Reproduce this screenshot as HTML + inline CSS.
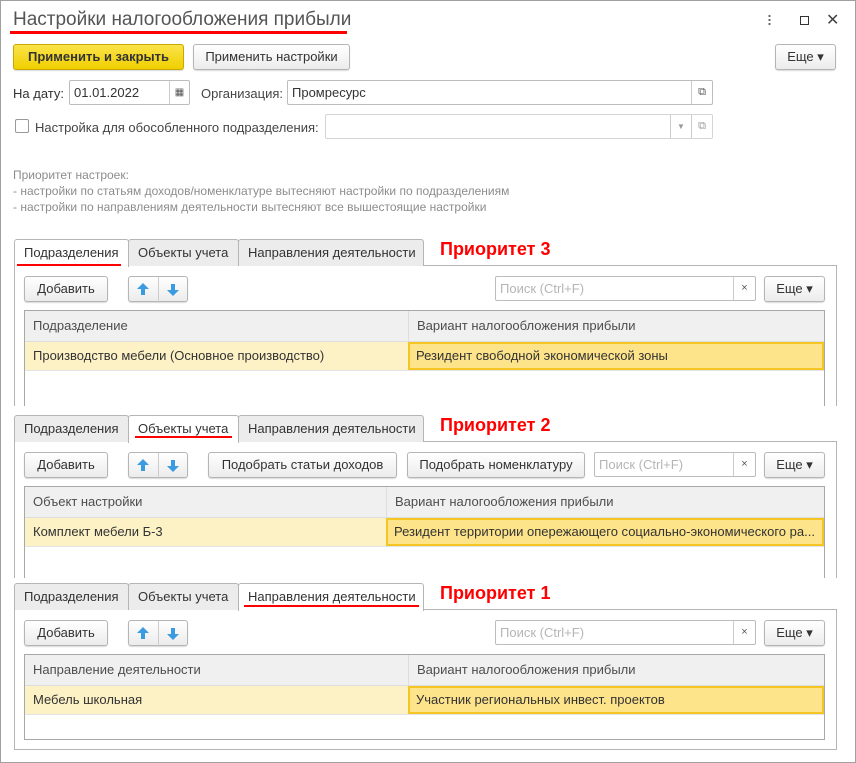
<!DOCTYPE html>
<html><head><meta charset="utf-8"><style>
*{box-sizing:border-box;margin:0;padding:0}
body{width:856px;height:763px;background:#fff;font-family:"Liberation Sans",Arial,sans-serif;font-size:13px;color:#333;position:relative;overflow:hidden}
.a{position:absolute}
.win{left:0;top:0;width:856px;height:763px;border:1px solid #a0a0a0}
.btn{position:absolute;height:26px;border:1px solid #b5b5b5;border-radius:3px;background:linear-gradient(#fff,#ececec);box-shadow:0 1px 1px rgba(0,0,0,.15);text-align:center;line-height:24px;color:#333;white-space:nowrap}
.inp{position:absolute;height:25px;border:1px solid #bdbdbd;border-radius:2px;background:#fff;line-height:23px;padding-left:4px;color:#333}
.seg{position:absolute;top:0;height:23px;border-left:1px solid #ccc;text-align:center;color:#555}
.tab{position:absolute;height:27px;border:1px solid #b5b5b5;border-bottom:none;border-radius:3px 3px 0 0;background:#ececec;line-height:25px;padding-left:9px;color:#333;white-space:nowrap;overflow:hidden}
.tab.on{background:#fff;height:28px}
.pan{position:absolute;border:1px solid #b5b5b5;border-bottom:none}
.grid{position:absolute;border:1px solid #a8a8a8;border-bottom:none;background:#fff}
.hd{position:absolute;left:0;right:0;top:0;height:31px;background:#f0f0f0;border-bottom:1px solid #ddd;line-height:30px;color:#4d4d4d}
.row{position:absolute;left:0;right:0;top:31px;height:29px;background:#fdf2c6;border-bottom:1px solid #e3e3e3;line-height:28px;color:#333}
.sel{position:absolute;top:0;right:0;height:28px;background:#fde48b;border:2px solid #f5c623;line-height:24px;padding-left:6px;white-space:nowrap;overflow:hidden}
.red{color:#ff0000;font-weight:bold;font-size:18px}
.ul{position:absolute;height:3px;background:#ff0000}
.ph{color:#b5b5b5}
.arr{position:absolute;width:60px;height:26px;border:1px solid #b5b5b5;border-radius:3px;background:linear-gradient(#fff,#ececec);box-shadow:0 1px 1px rgba(0,0,0,.15)}
</style></head><body>
<div class="a win"></div>
<div class="a" style="left:13px;top:9px;font-size:19px;color:#555">Настройки налогообложения прибыли</div>
<div class="ul" style="left:10px;top:31px;width:337px"></div>
<div class="a" style="left:768px;top:14px;width:3px;height:13px;background:radial-gradient(circle,#666 1px,transparent 1.3px) 0 0/3px 4px"></div>
<div class="a" style="left:800px;top:16px;width:9px;height:9px;border:1px solid #333"></div>
<div class="a" style="left:826px;top:10px;font-size:16px;color:#444;font-weight:100">✕</div>

<div class="btn" style="left:13px;top:44px;width:171px;background:linear-gradient(#fbe34a,#f0cf00);border-color:#c9a900;font-weight:bold;color:#333">Применить и закрыть</div>
<div class="btn" style="left:193px;top:44px;width:157px">Применить настройки</div>
<div class="btn" style="left:775px;top:44px;width:61px">Еще ▾</div>

<div class="a" style="left:13px;top:86px">На дату:</div>
<div class="inp" style="left:69px;top:80px;width:121px">01.01.2022<div class="seg" style="left:99px;width:20px;font-size:10px">▦</div></div>
<div class="a" style="left:201px;top:86px;color:#444">Организация:</div>
<div class="inp" style="left:287px;top:80px;width:426px">Промресурс<div class="seg" style="left:403px;width:21px;font-size:11px">⧉</div></div>

<div class="a" style="left:15px;top:119px;width:14px;height:14px;border:1px solid #999;border-radius:2px"></div>
<div class="a" style="left:35px;top:120px;color:#444">Настройка для обособленного подразделения:</div>
<div class="inp" style="left:325px;top:114px;width:388px;border-color:#d5d5d5"><div class="seg" style="left:344px;width:21px;font-size:8px;color:#999">▼</div><div class="seg" style="left:365px;width:21px;font-size:11px;color:#999">⧉</div></div>

<div class="a" style="left:13px;top:167px;font-size:12px;color:#8c8c8c;line-height:16px">Приоритет настроек:<br>- настройки по статьям доходов/номенклатуре вытесняют настройки по подразделениям<br>- настройки по направлениям деятельности вытесняют все вышестоящие настройки</div>

<!-- section 1 -->
<div class="pan" style="left:14px;top:265px;width:823px;height:141px"></div>
<div class="tab on" style="left:14px;top:239px;width:115px">Подразделения</div>
<div class="tab" style="left:128px;top:239px;width:111px">Объекты учета</div>
<div class="tab" style="left:238px;top:239px;width:186px">Направления деятельности</div>
<div class="ul" style="left:17px;top:264px;width:104px;height:2px"></div>
<div class="a red" style="left:440px;top:239px">Приоритет 3</div>
<div class="btn" style="left:24px;top:276px;width:84px">Добавить</div>
<div class="arr" style="left:128px;top:276px"><svg width="60" height="26" class="a"><line x1="29.5" y1="0" x2="29.5" y2="26" stroke="#ccc"/><path d="M14 6l-6 6h4v6h4v-6h4z" fill="#3a9be0"/><path d="M44 19l-6-6h4V7h4v6h4z" fill="#3a9be0"/></svg></div>
<div class="inp" style="left:495px;top:276px;width:261px"><span class="ph">Поиск (Ctrl+F)</span><div class="seg" style="left:237px;width:22px;font-size:11px">×</div></div>
<div class="btn" style="left:764px;top:276px;width:61px">Еще ▾</div>
<div class="grid" style="left:24px;top:310px;width:801px;height:96px">
<div class="hd"><span class="a" style="left:8px">Подразделение</span><span class="a" style="left:383px;top:0;height:31px;border-left:1px solid #ddd;padding-left:8px">Вариант налогообложения прибыли</span></div>
<div class="row"><span class="a" style="left:8px">Производство мебели (Основное производство)</span><div class="sel" style="left:383px">Резидент свободной экономической зоны</div></div>
</div>

<!-- section 2 -->
<div class="pan" style="left:14px;top:441px;width:823px;height:137px"></div>
<div class="tab" style="left:14px;top:415px;width:115px">Подразделения</div>
<div class="tab on" style="left:128px;top:415px;width:111px">Объекты учета</div>
<div class="tab" style="left:238px;top:415px;width:186px">Направления деятельности</div>
<div class="ul" style="left:135px;top:436px;width:97px;height:2px"></div>
<div class="a red" style="left:440px;top:415px">Приоритет 2</div>
<div class="btn" style="left:24px;top:452px;width:84px">Добавить</div>
<div class="arr" style="left:128px;top:452px"><svg width="60" height="26" class="a"><line x1="29.5" y1="0" x2="29.5" y2="26" stroke="#ccc"/><path d="M14 6l-6 6h4v6h4v-6h4z" fill="#3a9be0"/><path d="M44 19l-6-6h4V7h4v6h4z" fill="#3a9be0"/></svg></div>
<div class="btn" style="left:208px;top:452px;width:189px">Подобрать статьи доходов</div>
<div class="btn" style="left:407px;top:452px;width:178px">Подобрать номенклатуру</div>
<div class="inp" style="left:594px;top:452px;width:162px"><span class="ph">Поиск (Ctrl+F)</span><div class="seg" style="left:138px;width:22px;font-size:11px">×</div></div>
<div class="btn" style="left:764px;top:452px;width:61px">Еще ▾</div>
<div class="grid" style="left:24px;top:486px;width:801px;height:92px">
<div class="hd"><span class="a" style="left:8px">Объект настройки</span><span class="a" style="left:361px;top:0;height:31px;border-left:1px solid #ddd;padding-left:8px">Вариант налогообложения прибыли</span></div>
<div class="row"><span class="a" style="left:8px">Комплект мебели Б-3</span><div class="sel" style="left:361px">Резидент территории опережающего социально-экономического ра...</div></div>
</div>

<!-- section 3 -->
<div class="pan" style="left:14px;top:609px;width:823px;height:141px;border-bottom:1px solid #b5b5b5"></div>
<div class="tab" style="left:14px;top:583px;width:115px">Подразделения</div>
<div class="tab" style="left:128px;top:583px;width:111px">Объекты учета</div>
<div class="tab on" style="left:238px;top:583px;width:186px">Направления деятельности</div>
<div class="ul" style="left:244px;top:605px;width:175px;height:2px"></div>
<div class="a red" style="left:440px;top:583px">Приоритет 1</div>
<div class="btn" style="left:24px;top:620px;width:84px">Добавить</div>
<div class="arr" style="left:128px;top:620px"><svg width="60" height="26" class="a"><line x1="29.5" y1="0" x2="29.5" y2="26" stroke="#ccc"/><path d="M14 6l-6 6h4v6h4v-6h4z" fill="#3a9be0"/><path d="M44 19l-6-6h4V7h4v6h4z" fill="#3a9be0"/></svg></div>
<div class="inp" style="left:495px;top:620px;width:261px"><span class="ph">Поиск (Ctrl+F)</span><div class="seg" style="left:237px;width:22px;font-size:11px">×</div></div>
<div class="btn" style="left:764px;top:620px;width:61px">Еще ▾</div>
<div class="grid" style="left:24px;top:654px;width:801px;height:86px;border-bottom:1px solid #a8a8a8">
<div class="hd"><span class="a" style="left:8px">Направление деятельности</span><span class="a" style="left:383px;top:0;height:31px;border-left:1px solid #ddd;padding-left:8px">Вариант налогообложения прибыли</span></div>
<div class="row"><span class="a" style="left:8px">Мебель школьная</span><div class="sel" style="left:383px">Участник региональных инвест. проектов</div></div>
</div>
</body></html>
